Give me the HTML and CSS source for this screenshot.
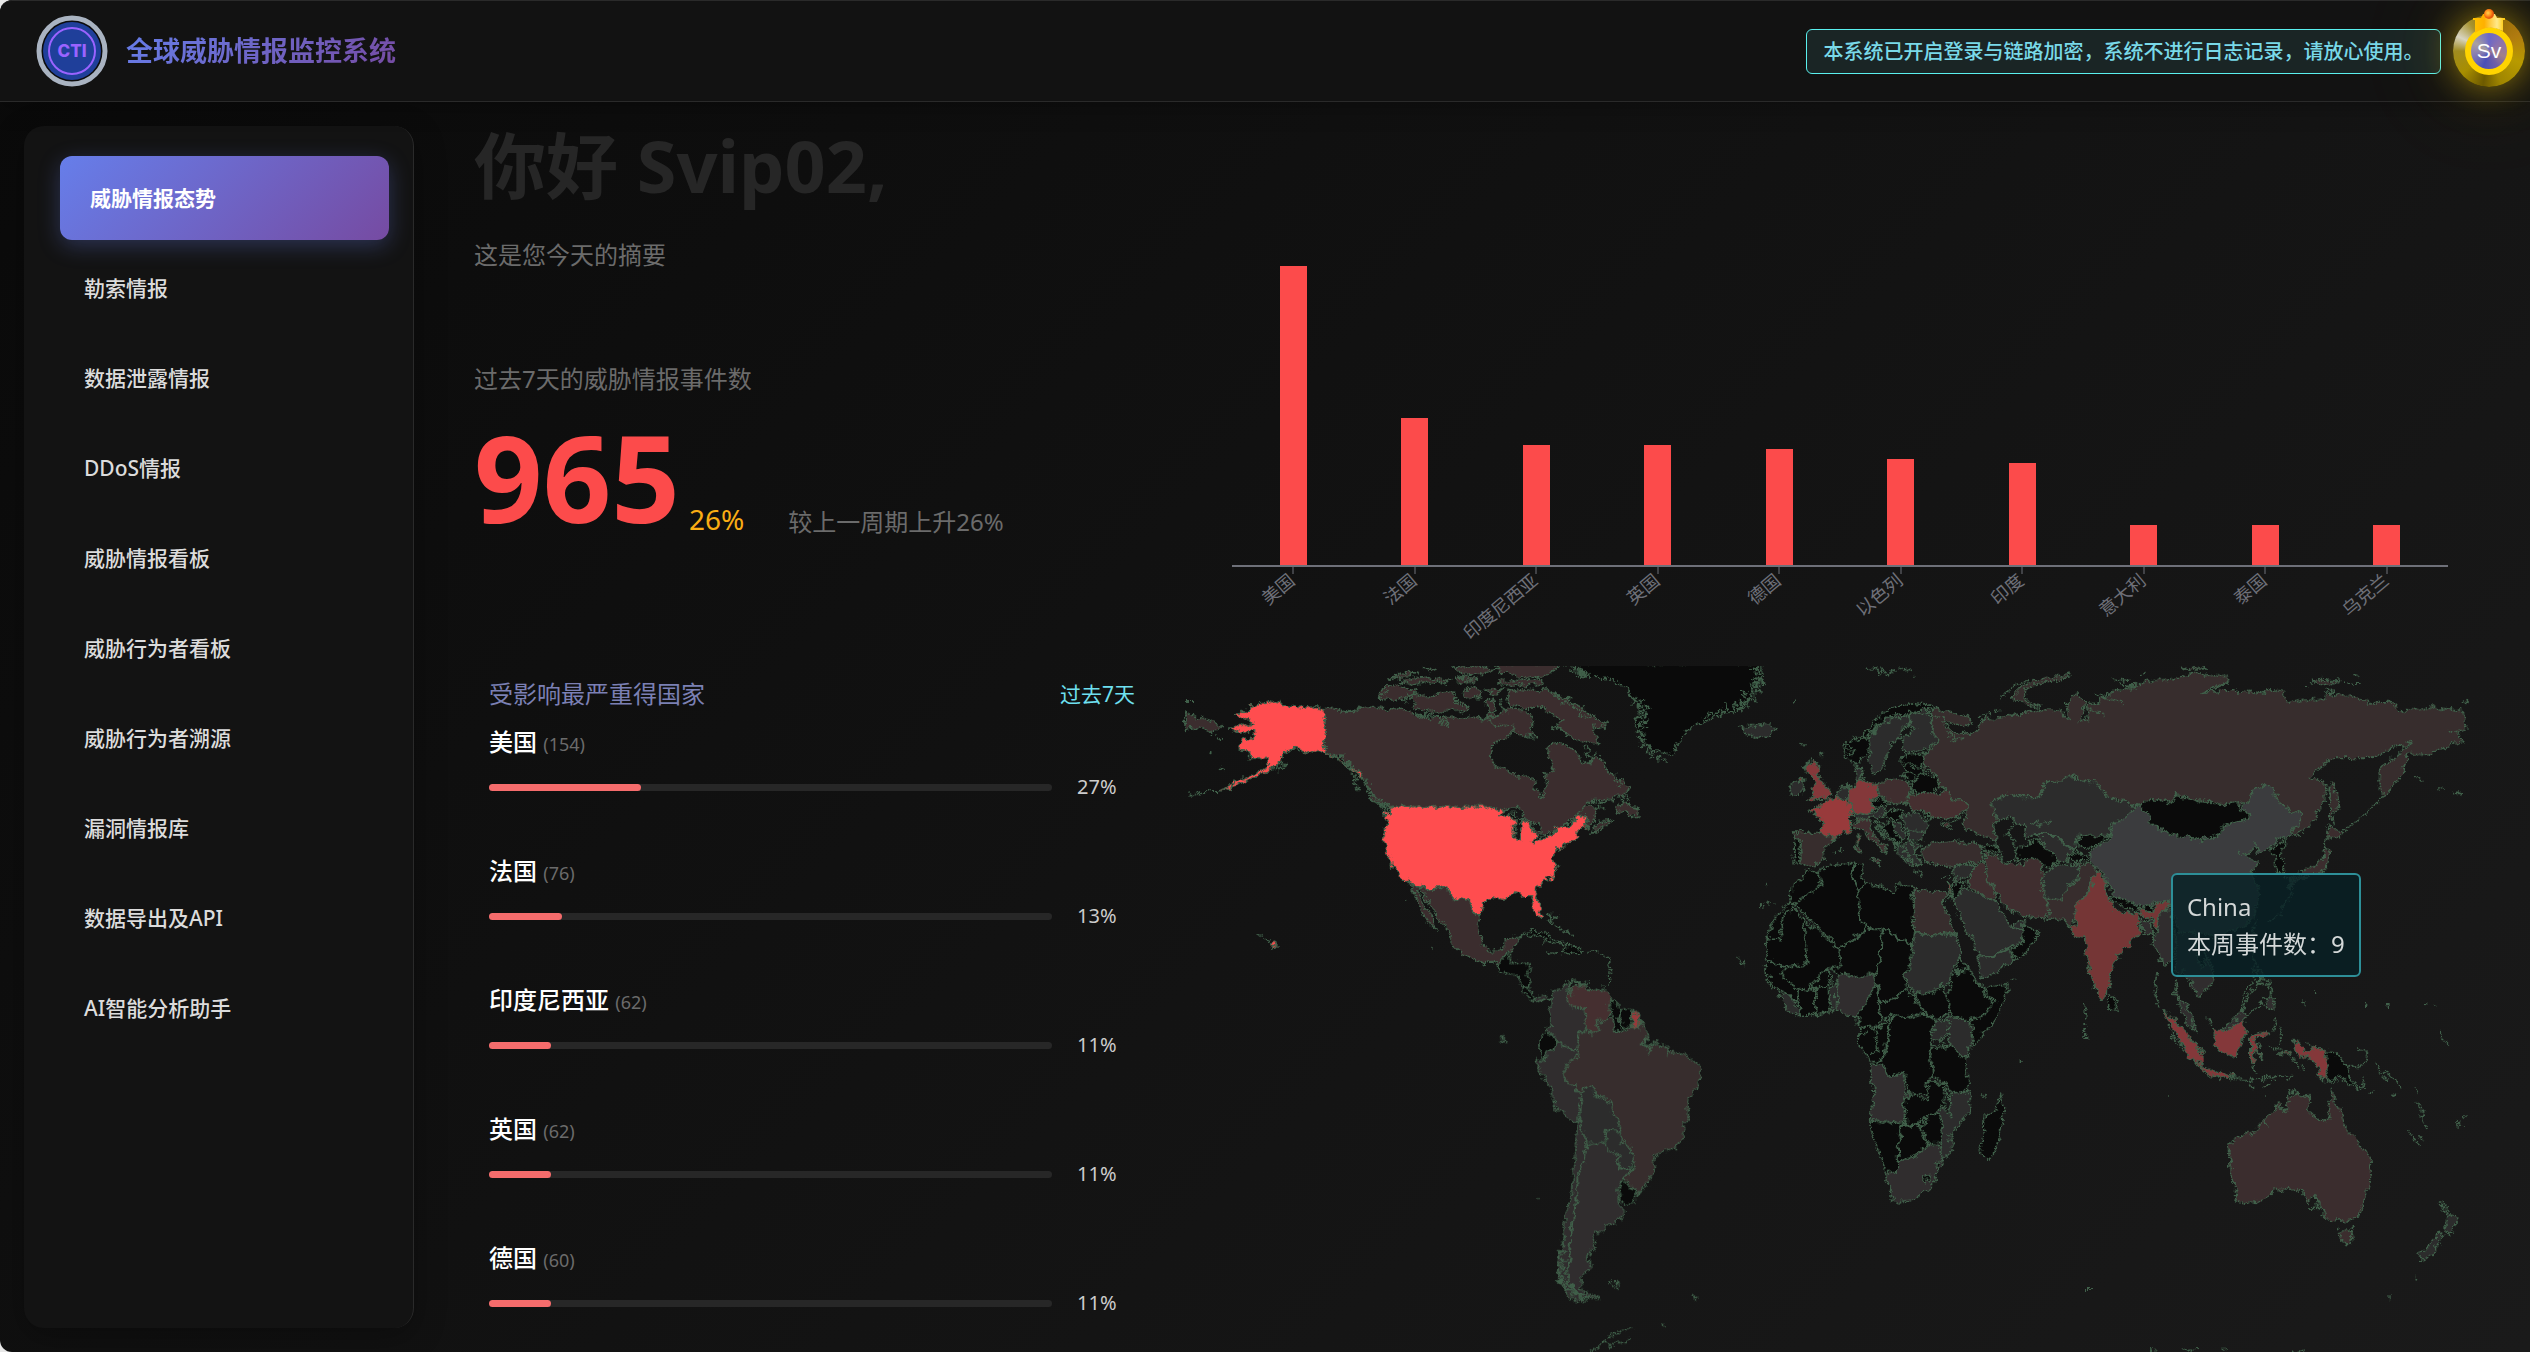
FILE: index.html
```html
<!DOCTYPE html>
<html lang="zh-CN">
<head>
<meta charset="utf-8">
<title>全球威胁情报监控系统</title>
<link rel="stylesheet" href="styles.css">
</head>
<body>
<header class="topbar">
  <svg class="logo" viewBox="0 0 72 72" role="img" aria-label="CTI">
    <circle cx="36" cy="36" r="33" fill="#0d0d0d" stroke="#a9b3c1" stroke-width="5"/>
    <circle cx="36" cy="36" r="29" fill="#1f3f9a"/>
    <circle cx="36" cy="36" r="23" fill="none" stroke="#9a63ff" stroke-width="2"/>
    <text x="36" y="42" class="logo-text">CTI</text>
  </svg>
  <h1 class="brand">全球威胁情报监控系统</h1>
  <p class="notice">本系统已开启登录与链路加密，系统不进行日志记录，请放心使用。</p>
  <button class="avatar" type="button" aria-label="Sv">
    <span class="avatar-core">Sv</span>
    <svg class="crown" viewBox="0 0 36 28" aria-hidden="true">
      <defs>
        <linearGradient id="crown-gold"><stop offset="0" stop-color="#ffc400"/><stop offset=".35" stop-color="#ffb000"/><stop offset=".75" stop-color="#ffe98a"/><stop offset="1" stop-color="#ffc800"/></linearGradient>
        <radialGradient id="crown-gem" cx=".4" cy=".4"><stop offset="0" stop-color="#ffd34d"/><stop offset=".6" stop-color="#ff8c1a"/><stop offset="1" stop-color="#e8590c"/></radialGradient>
      </defs>
      <path d="M2 9L10 9L12 5H24L26 9L34 9V11H32V22Q18 14 4 24V11H2Z" fill="url(#crown-gold)"/>
      <circle cx="18" cy="5" r="5" fill="url(#crown-gem)"/>
    </svg>
  </button>
</header>

<div class="layout">
  <nav class="sidebar">
    <a class="nav-item active" href="#">威胁情报态势</a>
    <a class="nav-item" href="#">勒索情报</a>
    <a class="nav-item" href="#">数据泄露情报</a>
    <a class="nav-item" href="#">DDoS情报</a>
    <a class="nav-item" href="#">威胁情报看板</a>
    <a class="nav-item" href="#">威胁行为者看板</a>
    <a class="nav-item" href="#">威胁行为者溯源</a>
    <a class="nav-item" href="#">漏洞情报库</a>
    <a class="nav-item" href="#">数据导出及API</a>
    <a class="nav-item" href="#">AI智能分析助手</a>
  </nav>

  <main class="dashboard">
    <section class="summary">
      <h2 class="hello">你好 Svip02,</h2>
      <p class="muted intro">这是您今天的摘要</p>
      <p class="muted">过去7天的威胁情报事件数</p>
      <div class="total">
        <strong class="total-value">965</strong>
        <span class="total-rate">26%</span>
        <span class="total-note">较上一周期上升26%</span>
      </div>
      <div class="ranking">
        <div class="ranking-head">
          <h3 class="ranking-title">受影响最严重得国家</h3>
          <a class="ranking-range" href="#">过去7天</a>
        </div>
        <ul class="countries">
          <li class="country"><p class="name">美国 <small>(154)</small></p><div class="meter"><div class="track"><div class="fill" style="width:27%"></div></div><span class="pct">27%</span></div></li>
          <li class="country"><p class="name">法国 <small>(76)</small></p><div class="meter"><div class="track"><div class="fill" style="width:13%"></div></div><span class="pct">13%</span></div></li>
          <li class="country"><p class="name">印度尼西亚 <small>(62)</small></p><div class="meter"><div class="track"><div class="fill" style="width:11%"></div></div><span class="pct">11%</span></div></li>
          <li class="country"><p class="name">英国 <small>(62)</small></p><div class="meter"><div class="track"><div class="fill" style="width:11%"></div></div><span class="pct">11%</span></div></li>
          <li class="country"><p class="name">德国 <small>(60)</small></p><div class="meter"><div class="track"><div class="fill" style="width:11%"></div></div><span class="pct">11%</span></div></li>
        </ul>
      </div>
    </section>

    <section class="visuals">
      <svg class="chart" viewBox="1180 126 1350 540" role="img" aria-label="各国威胁事件数">
        <g class="bars">
          <rect x="1280" y="266" width="27" height="300"/>
          <rect x="1401" y="418" width="27" height="148"/>
          <rect x="1523" y="445" width="27" height="121"/>
          <rect x="1644" y="445" width="27" height="121"/>
          <rect x="1766" y="449" width="27" height="117"/>
          <rect x="1887" y="459" width="27" height="107"/>
          <rect x="2009" y="463" width="27" height="103"/>
          <rect x="2130" y="525" width="27" height="41"/>
          <rect x="2252" y="525" width="27" height="41"/>
          <rect x="2373" y="525" width="27" height="41"/>
        </g>
        <path class="axis" d="M1232 566H2448"/>
        <path class="ticks" d="M1293 566v8M1415 566v8M1536 566v8M1658 566v8M1779 566v8M1901 566v8M2022 566v8M2144 566v8M2265 566v8M2387 566v8"/>
        <g class="labels">
          <text transform="translate(1293 579) rotate(-40)">美国</text>
          <text transform="translate(1415 579) rotate(-40)">法国</text>
          <text transform="translate(1536 579) rotate(-40)">印度尼西亚</text>
          <text transform="translate(1658 579) rotate(-40)">英国</text>
          <text transform="translate(1779 579) rotate(-40)">德国</text>
          <text transform="translate(1901 579) rotate(-40)">以色列</text>
          <text transform="translate(2022 579) rotate(-40)">印度</text>
          <text transform="translate(2144 579) rotate(-40)">意大利</text>
          <text transform="translate(2265 579) rotate(-40)">泰国</text>
          <text transform="translate(2387 579) rotate(-40)">乌克兰</text>
        </g>
      </svg>

      <div class="map-wrap">
      <svg class="map" viewBox="1180 666 1350 686" role="img" aria-label="世界地图">
        <defs>
          <!-- roughens coastlines and borders -->
          <filter id="coastline" filterUnits="userSpaceOnUse" x="1180" y="666" width="1350" height="686" color-interpolation-filters="sRGB">
            <feTurbulence type="fractalNoise" baseFrequency=".14" numOctaves="3" seed="4" result="noise"/>
            <feDisplacementMap in="SourceGraphic" in2="noise" scale="9" xChannelSelector="R" yChannelSelector="G"/>
          </filter>
        </defs>
        <g filter="url(#coastline)">
        <!-- North America -->
        <g transform="translate(1180 640) scale(.33333)">
          <path class="c1" d="M434 207L450 205 480 215 500 215 540 205 580 200 620 208 650 205 690 215 715 232 750 235 790 232 800 255 795 232 840 235 880 228 915 240 935 215 960 235 985 250 1010 268 975 292 940 310 928 345 945 380 975 385 1015 410 1058 408 1062 440 1085 470 1098 440 1095 408 1118 400 1122 375 1105 355 1105 320 1135 308 1170 318 1190 340 1205 362 1230 370 1248 342 1265 365 1285 395 1305 410 1330 425 1345 445 1330 465 1300 478 1240 482 1215 492 1195 520 1170 540 1145 556 1125 575 1090 590 1062 605 1050 600 1065 580 1060 560 1040 545 1030 520 1000 510 960 515 925 500 634 500 610 495 570 478 580 465 560 430 535 405 505 370 485 350 465 345 434 340Z"/>
          <path class="c1" d="M612 138L665 140 710 150 690 170 640 183 600 175ZM680 160L750 170 790 155 822 155 830 190 865 200 860 215 800 212 750 218 700 205 700 180ZM628 115L680 95 705 100 660 115ZM660 128L700 115 740 108 760 118 810 120 790 130 740 128 700 132ZM735 88L770 82 760 92ZM820 85L870 80 950 90 910 100 840 98ZM820 115L860 105 895 118 880 128 840 126ZM940 70H1150L1110 95 1100 110 1030 112 960 95ZM955 122L1085 120 1090 133 1000 137 955 132ZM850 155L880 142 910 155 895 175 860 172ZM920 145L970 148 940 165ZM915 185L940 178 950 205 925 212ZM985 155L1040 148 1100 152 1150 170 1210 205 1245 235 1282 248 1270 270 1240 260 1250 295 1255 315 1200 300 1160 285 1130 260 1150 240 1120 225 1090 200 1040 205 990 195 980 175ZM925 235L960 222 990 205 1040 215 1060 240 1050 270 1070 290 1020 285 1000 260 930 250ZM1310 515L1325 480 1345 490 1370 505 1375 530 1340 520ZM1235 575L1255 545 1295 543 1270 560 1245 575ZM1175 545L1215 495 1250 500 1245 540 1225 560 1215 526 1195 528 1185 545ZM18 217L60 235 100 240 125 260 95 280 60 262 18 270Z"/>
          <path class="us" d="M434 207L400 203 365 200 340 197 315 195 300 188 270 184 245 192 215 200 200 212 165 224 190 236 230 250 205 256 175 256 150 264 165 272 190 277 220 276 222 294 190 300 178 312 176 325 200 335 212 345 212 358 240 356 266 360 268 375 245 393 215 405 180 420 160 432 120 452 150 446 190 427 230 410 265 394 295 370 310 345 320 330 355 325 375 335 400 338 434 340 465 352 485 365 500 380 520 385 550 405 540 412 515 390 490 368 465 348 434 343ZM634 500H925L960 512 1000 515 975 530 1010 540 1000 560 1000 590 1010 603 1018 590 1018 560 1025 545 1045 545 1062 575 1075 590 1100 580 1125 575 1130 560 1170 555 1185 545 1195 528 1215 526 1220 560 1195 575 1185 600 1150 615 1140 640 1130 625 1118 655 1130 680 1122 705 1095 720 1070 745 1070 775 1082 810 1083 835 1075 838 1058 800 1050 770 1030 765 1005 760 985 768 975 780 935 772 905 795 900 825 885 820 865 780 845 770 830 785 800 742 750 748 715 738 690 732 655 705 635 675 630 650 615 620 612 580 620 540 612 510 634 520ZM274 914L282 908 290 918 276 926Z"/>
          <path class="sea" d="M958 530L985 508 1010 503 1030 520 1045 538 1020 535 995 520 975 532ZM1003 602L1000 575 1010 548 1030 543 1022 570 1018 600ZM1050 548L1075 553 1085 572 1065 574ZM1050 602L1085 583 1125 572 1120 582 1085 595 1060 607Z"/>
          <path class="c1" d="M690 732L715 738 750 748 800 742 830 785 845 770 865 780 885 820 898 828 895 870 910 915 935 935 965 930 975 900 1012 888 1010 910 995 930 970 940 965 965 955 985 940 965 910 970 860 950 815 915 812 885 785 845 755 805 735 770 720 742 712 755 730 790 750 820 768 868 745 850 720 805 705 770Z"/>
          <path class="none" d="M1160 70L1200 95 1230 110 1300 118 1340 150 1380 200 1365 250 1385 300 1410 325 1440 335 1480 345 1505 290 1530 262 1560 250 1620 225 1680 205 1700 190 1720 150 1740 110 1745 70ZM1015 890L1060 870 1090 875 1120 895 1155 912 1120 908 1075 885ZM1145 940L1160 915 1190 922 1210 938 1180 940Z"/>
          <path class="coast" d="M18 183h26M105 292l25 6M28 464l60-10 30-2M92 335l8 4M120 382l10 8M285 385l20-15 12 4-20 15zM318 340l20-12 20 5M490 350l10 20 8-6 4 20 10-8 4 22 12-6M500 372l20 20-6 12 20 14-8 10 12 24M545 410l10 24 14 4-4 16 16 10 4 14 20 2-8 14 30-4-10 14 25 4M570 478l30 20 20 4M520 430l16 26M1165 92l50 6-20-10 40 12-50 6 40 4M1350 165l20 10-10 12 30-4-14 18 28 2-24 14 20 8-30 10 30 6-24 14 22 8-26 10 20 12-20 6 24 10-14 16 24 6-8 14 20 0-4 18 24-4-4 14 26-4M1570 240l20-24 14 14 10-26 18 20 6-24 20 18 8-26 16 20 4-30 20 14 0-24 20 6-4-24 18 2-14-20 24-4-16-14M1100 150l40 14-20 6 44 8-14 12 36 2-10 14 30 6-8 14 30 6M1260 260l18-12M1210 318l20 16-16 8 20 14M1300 420l24 10-10 14M1230 482l40 6-20 10 26 8M1330 470l-10 30M1340 460l6 30 24 20M1100 815l20 25-14 4 30 14 10 14 34 14M1110 830l30 4M1105 935l18 3M1225 935l28 2M1265 940l22 22 5 28-6 42M1150 1045l30-20 40 10M230 882l15 3M250 890l22 14M630 120l30-14-10-2M840 110l40 8-30 6M710 222l20 4M1090 400l10-4M1040 292l20 4M675 782h4M754 926h4"/>
          <path class="coast" d="M480 215l20 0-6 6 30-14-4 8 30-12M600 170l20-14M670 182l12-10-8 20M720 232l-10-8 30 6-6-8 30 8M780 240l24 20M905 225l16 10-22-2M960 175l4 30 20 14M1120 260l36 20M1232 370l16-34"/>
        </g>
        <!-- South America -->
        <g transform="translate(1450 940) scale(.33333)">
          <path class="none" d="M160 48L178 42 178 70 210 70 240 72 236 105 238 140 218 140 200 105 175 102 148 95 145 75ZM218 140L238 140 250 165 270 178 245 180 215 152ZM485 175L512 210 508 235 520 265 500 275 490 260 490 230 478 215ZM512 210L550 212 545 262 520 265 508 235ZM270 290L290 280 322 295 320 318 295 335 282 362 270 345ZM515 725L555 750 552 785 530 792 508 780Z"/>
          <path class="c0" d="M250 175L285 162 300 180 280 180 262 190ZM300 182L312 155 345 135 362 128 350 165 358 195 408 208 404 240 408 270 385 275 385 325 350 325 322 295 288 272 303 250ZM322 300L350 325 385 330 382 352 350 370 340 405 358 435 375 430 380 452 392 455 388 510 382 552 320 505 300 445 265 385 262 355 282 362 295 335 320 318ZM410 612L460 608 512 650 505 685 552 685 520 718 505 745 505 785 522 820 505 845 465 852 462 880 432 880 435 920 408 950 425 975 395 1010 390 1035 405 1060 455 1073 400 1075 350 1020 360 940 368 830 382 770 382 710 398 675ZM382 552L388 540 400 580 410 612 398 675 382 710 382 770 368 830 360 940 350 1000 360 1033 395 1075 410 1087 365 1078 335 1040 322 1000 330 950 342 890 345 830 362 780 370 690Z"/>
          <path class="ven" d="M362 150L395 130 430 152 470 148 485 175 475 195 480 225 470 240 440 240 448 270 425 284 410 268 404 240 408 208 358 195 350 165Z"/>
          <path class="c1b" d="M385 275L408 270 425 284 448 270 440 240 470 240 490 235 490 260 500 275 545 262 562 264 575 240 590 275 600 295 575 315 605 320 620 305 650 320 655 335 700 338 745 370 757 405 740 440 712 485 712 540 700 580 680 622 645 630 612 655 608 700 590 730 562 765 555 745 520 718 552 685 545 640 530 612 512 608 510 560 502 528 487 525 482 488 432 465 430 435 392 455 380 452 375 430 358 435 340 405 350 370 382 352Z"/>
          <path class="low" d="M392 455L430 435 432 465 482 488 487 525 502 528 512 570 470 572 460 608 410 612 400 580 388 540ZM470 572L508 572 512 608 535 615 552 660 540 685 505 685 512 650 465 618Z"/>
          <path class="hot3" d="M550 218L568 222 572 240 562 264 548 262Z"/>
          <path class="coast" d="M360 145l6 20-10-4M355 125l20-6 8 12 30-4M440 150l30-10M570 318l20-20-4 24 24-14-14 24 18-8-22 18M652 320l-2 30 4-20M560 770l16-22 8 4 12-24M340 890l-8 20 14 6-16 14 18 8-22 14 20 10-20 14 16 12-16 14 16 14-14 10 20 12-4 12 24 2-4 14 26-4 2 12 30-4M328 960l10 20-12 14 14 12-10 16 20 10-8 14 24 8M350 1020l10 24 20 4-4 14 26 2M360 1040l30 30M475 1030l20-6 14 4-8 12-18-2zM725 1064l20 10M635 1157l16-1M265 774h4M150 290l10 6-8 8 18 2-10-14M470 1190l40-14 40-13M420 1235l30-14 20-20 10 18 24-20 8 14 26-18M440 900l8 4M860 55l14 20 10-10 4 18M240 180l14 10M270 185l10-8M320 5l-40 2M300 38l16 2"/>
        </g>
        <!-- Russia and East Asia -->
        <g transform="translate(2080 650) scale(.33333)">
          <path class="c1b" d="M-445 177L-400 184-325 204-330 227-380 223-410 210-395 235-380 246-330 252-295 230-285 204-260 209-170 191-115 177-60 184-35 204-45 161-5 126 15 161 0 220 25 204 20 175 30 161 60 150 100 125 150 110 200 95 290 85 345 65 380 75 440 80 445 100 400 115 365 130 440 120 510 125 550 130 560 118 610 125 620 155 640 155 690 150 730 148 740 130 790 140 830 140 860 158 935 158 955 180 1040 178 1060 172 1150 182 1157 240 1130 245 1150 275 1110 285 1050 312 980 315 970 370 910 440 897 400 900 355 940 325 985 285 940 290 885 320 850 325 755 325 690 380 740 405 735 450 700 510 655 558 637 545 640 530 670 485 640 488 600 460 580 415 550 405 520 415 508 455 470 460 415 465 375 452 330 450 290 432 280 455 215 448 175 468 85 439 50 396 20 396-20 380-110 402-115 441-180 441-220 431-263 461-245 509-260 536-250 576-300 557-355 525-335 477-340 461-385 445-395 420-422 405-430 380-465 354-462 311-422 273-442 252ZM752 400L765 410 775 470 760 490 758 520 750 500ZM697 92L720 86 780 92 740 104 705 102ZM300 56L350 48 380 56Z"/>
          <path class="c1" d="M735 590L750 610 735 660 690 672 645 672 700 650 725 630ZM748 530L790 548 765 565 742 560ZM635 682L690 680 640 700 632 720Z"/>
          <path class="china" d="M175 468L205 490 210 522 250 535 265 555 310 558 355 572 415 555 430 525 480 515 512 495 475 475 508 455 520 415 550 405 580 415 600 460 640 488 670 485 655 530 637 535 635 555 600 568 560 600 530 615 535 590 495 612 510 630 540 635 512 665 530 700 540 740 520 800 490 830 450 845 400 860 370 850 340 845 300 850 290 820 280 790 265 752 235 755 215 765 175 768 110 738 80 705 75 670 45 650 25 605 90 570 95 525 120 495 150 485Z"/>
          <path class="none" d="M175 468L215 448 280 455 290 432 330 450 375 452 415 465 470 460 480 475 512 495 480 515 430 525 415 555 355 572 310 558 265 555 250 535 210 522 205 490ZM570 600L600 580 625 562 600 610 615 640 612 668 590 670 585 620ZM92 740L110 740 175 770 172 790 130 770 95 755ZM188 768L216 768 211 786 193 781Z"/>
          <path class="hot1" d="M178 775L215 785 235 760 265 752 272 765 245 790 230 840 215 805 182 795Z"/>
          <path class="c0" d="M180 808L215 812 220 850 190 850ZM230 845L245 785 275 770 285 870 275 930 250 945 220 870ZM285 850L340 845 350 880 385 930 400 960 400 990 360 1040 330 1000 310 960 290 980Z"/>
          <path class="none" d="M345 850L370 880 380 930 365 955 350 900Z"/>
          <path class="coast" d="M-240 145L-200 107-150 88M95 88l50 2M180 72l20-4M120 100l40 6-30 8 40 4M50 140l30-10-10 16 50 6 4 14M20 175l50 14 4 16M365 130l40-20 40-15M675 112h20M740 120l24 4-20 4M795 97l50 2M820 76h12M1145 152l12 4-6 6M1100 245l36 2M980 280l16-6M1005 380l20 10M1075 415l20 2M1120 432l14-6 18 8M910 440L880 470 840 510 790 540M745 410l10 40M740 560l-8 20 8 16M610 680l30 10-10 20 6 24-24 26-12 30-40 30M530 805l-10 30-4 40 8 60-10 40 24 30M520 960l30 30-12 14 32-4-10 20 16-4 4 30M545 990l-36 40-20 50M220 870l-4 10M285 985l-4 60M228 980l-2 40 10 50M480 608l20 4M540 600l-20-20M640 690l30-4 20-8M670 1060l2-8M855 1062h4M1062 1064h10M708 1030h3"/>
        </g>
        <!-- Europe, Africa, western and southern Asia -->
        <g transform="translate(1740 650) scale(.33333 .35714)">
          <path class="c1b" d="M810 135L850 100 900 82 990 68 985 78 910 90 860 110 850 135 900 160 870 155ZM162 510L245 512 290 525 255 560 252 585 225 602 195 605 182 595 182 530 165 525ZM545 560L575 540 640 535 690 540 722 545 732 592 700 598 660 600 610 605 565 598 548 580ZM522 668L570 675 625 675 615 700 605 700 650 795H523ZM915 697L965 695 985 665 1015 640 1020 598 1060 600 1072 625 1050 635 1058 665 1035 690 1005 720 1010 750 990 770 970 752 925 752 930 735Z"/>
          <path class="c2" d="M412 375L440 362 505 368 512 400 498 432 440 420 415 410ZM332 485L365 475 395 470 385 495 410 530 440 550 432 570 410 545 375 510 350 500ZM390 585L420 588 415 600ZM348 545L358 545 360 567 350 571ZM735 565L775 580 795 600 850 600 875 583 905 595 910 650 915 700 930 735 910 752 860 745 820 735 790 710 760 665 745 640ZM700 605L730 598 745 640 765 665 760 700 740 695 680 655 695 635Z"/>
          <path class="ven" d="M498 432L512 405 560 402 598 402 625 392 635 415 680 430 685 445 665 460 640 468 620 475 605 470 580 470 560 455 545 448 520 450ZM610 485L630 483 635 493 620 498Z"/>
          <path class="low" d="M5 215L40 215 90 205 112 222 90 240 55 247 20 235ZM150 385L165 365 192 368 190 398 152 404ZM388 245L415 210 450 185 480 180 508 185 512 210 485 225 480 245 450 260 445 290 432 310 430 335 400 350 385 310 388 285ZM510 180L555 162 575 200 580 235 598 255 560 280 500 290 485 270 488 245 525 222 512 210ZM345 335L365 330 370 350 365 365 347 365ZM285 410L310 378 330 378 325 425 300 418ZM335 462L370 460 400 455 430 440 432 465 395 470 350 480ZM462 475L482 485 497 515 487 530 465 510ZM485 465L520 452 550 470 565 490 555 508 500 508ZM500 508L555 510 550 530 510 538ZM470 545L510 538 545 548 520 560 545 600 515 610 490 585 475 570ZM640 605L700 600 690 635 650 650 640 630ZM905 640L940 605 1020 598 1015 640 985 665 965 695 915 697ZM757 430L800 402 840 412 905 412 910 375 1000 355 1040 370 1070 370 1105 410 1160 430 1190 435 1140 480 1110 490 1110 520 1015 522 1000 560 970 540 940 515 890 515 855 530 852 490 820 475 795 480 760 460ZM890 515L940 515 970 540 1000 560 980 590 958 590 920 560ZM635 695L675 665 740 695 765 700 790 740 815 780 850 785 845 818 810 835 760 860 715 855 690 800 665 760 650 725ZM715 855L760 860 810 835 820 865 780 895 722 922ZM810 775L850 755 850 785ZM523 797H650L660 850 640 900 620 940 600 955 560 960 530 965 510 950 497 915 512 880ZM115 965L145 960 180 1010 178 1028 140 1005ZM270 950L292 930 290 1005 272 1008ZM585 1040L625 1035 628 1070 600 1090 575 1095ZM628 1028L695 1040 695 1105 678 1145 628 1105ZM630 1245L690 1235 692 1295 630 1355 637 1405 605 1430 600 1390 608 1320 582 1290 615 1280 635 1310 630 1270Z"/>
          <path class="c0" d="M292 930L300 905 345 915 405 908 412 930 375 990 350 1030 325 1025 290 1005ZM390 1165H435L445 1195 490 1185 495 1240 512 1240 492 1255 495 1325 385 1315 402 1250ZM435 1465L470 1460 475 1430 515 1425 570 1385 600 1390 608 1440 570 1505 520 1540 460 1547 450 1510Z"/>
          <path class="none" d="M310 265L345 250 385 225 410 190 450 165 510 148 570 152 590 165 555 162 510 180 480 180 450 185 415 210 385 245 388 285 350 318 320 305ZM485 300L510 295 555 292 555 320 540 320 560 345 540 350 515 370 485 350 510 345 490 325ZM515 370L550 348 590 355 598 378 580 402 515 398ZM163 525L182 530 180 598 160 598ZM390 420L420 415 450 430 420 442 400 440ZM435 460L460 445 492 450 480 470 445 475ZM405 480L430 492 460 478 465 520 490 530 470 545 450 520 430 505ZM550 450L570 465 565 480ZM640 655L670 655 660 680 635 698ZM722 545L770 548 785 545 775 570 740 560ZM835 555L890 530 920 560 958 590 930 617 905 595 875 583 835 588ZM1015 520L1110 520 1080 540 1045 555 1010 545ZM985 570L1040 575 1055 592 1010 590 985 592ZM850 765L893 790 880 825 845 860 820 862 815 838 845 820ZM195 618L240 625 242 660 200 690 165 710 150 700 155 670 185 640ZM240 610L300 600 345 598 338 640 358 680 360 760 385 778 298 835 165 715 200 690 242 660ZM345 598L368 600 365 640 375 650 358 680 338 640ZM375 652L430 665 465 685 475 655 520 665 522 790 515 825 425 780 385 778 360 760 358 680ZM150 702L165 715 130 740 120 808H78L110 745ZM80 808H120L130 740 165 730 190 755 200 882 130 888 82 868ZM190 755L298 835 302 882 260 892 205 950 175 948 130 920 130 888 200 882ZM298 835L385 778 425 780 422 860 405 905 345 915 300 905 265 895 302 882ZM425 780L515 825 510 880 495 915 498 950 450 980 415 985 410 940 405 905 422 860ZM650 900L690 895 715 940 765 985 730 1025 690 1035 640 1025 622 980 630 930ZM725 950L800 935 800 960 770 1030 700 1110 695 1040 730 1025 765 985 740 970ZM660 860L715 935 690 895 650 900ZM520 965L560 960 600 955 605 930 622 980 628 1020 590 1035 560 1020ZM420 990L450 980 498 950 520 970 555 1018 500 1028 455 1025 425 1040ZM85 870L130 888 130 920 175 948 170 985 140 960 105 950 80 930 75 890ZM172 950L225 955 225 1020 180 1025ZM205 945L260 892 275 935 225 950ZM228 945L265 940 270 1015 228 1022ZM350 1030L375 990 412 930 415 985 425 1055 360 1055ZM360 1058L425 1058 455 1025 450 1060 435 1130 425 1150 390 1150 355 1100ZM455 1025L500 1028 555 1018 585 1040 575 1100 570 1140 580 1200 560 1210 565 1245 510 1240 490 1185 445 1195 435 1165 390 1160 425 1150 440 1100ZM575 1115L628 1108 678 1145 685 1230 635 1240 610 1210 580 1195 575 1150ZM492 1260L512 1240 565 1265 560 1210 612 1215 610 1275 545 1330 500 1325ZM532 1325L582 1298 608 1320 600 1380 570 1385ZM482 1330L530 1330 565 1385 515 1425 475 1430ZM385 1318L520 1325 482 1330 470 1460 435 1465 410 1390ZM550 1480L565 1470 570 1478 558 1493ZM586 1436L598 1436 596 1448 588 1446ZM782 1248L795 1290 765 1410 740 1425 720 1410 730 1350 730 1305 765 1290ZM1108 965L1130 985 1125 1010 1105 1000Z"/>
          <path class="sea" d="M760 490L790 470 825 475 815 500 800 515 825 540 830 580 800 600 780 575 770 530Z"/>
          <path class="hot1" d="M1050 635L1080 622 1098 650 1098 680 1112 710 1130 730 1195 740 1200 790 1160 830 1115 880 1110 940 1085 980 1070 960 1045 890 1033 800 1010 810 990 775 1010 770 1000 725 1035 690 1058 665Z"/>
          <path class="hot2" d="M200 320L222 312 238 328 230 345 245 365 262 385 275 400 260 415 205 422 225 405 208 390 228 375 212 350 200 345ZM178 358L196 362 192 370 180 366ZM325 385L345 380 360 362 385 375 410 372 412 410 390 420 400 445 385 458 340 458 338 435 325 425ZM626 655L634 655 631 695ZM350 522L358 522 358 540 350 540Z"/>
          <path class="hot3" d="M205 447L240 440 250 425 285 412 300 420 340 435 330 465 332 512 305 512 285 525 245 512 243 470 230 460Z"/>
          <path class="coast" d="M30 50l30 6-20 8 28 8-24 10 20 6-30 10 10 10M0 110l20 8-14 12 20 10-16 12 16 8M375 45l20 10 14-6 8 16 14-10 8 14 20-14 10 6M475 48l20 10 20-2M520 75h6M162 147h8M178 262l12 4-6 6M240 285l6 4-4 10M185 330l12-8-6 22 10 4M200 316l14-10M310 265l20 4-14 10 26 4-18 12M345 245l10 12 14-18 6 10 16-22 10 8 8-24 14 6 6-20 20 6 4-16 24 8 4-16 28 6 4-12 34 8 20-6 24 12M340 340l14-14 18 20-10 8 14 8M310 385l14-4-6 10M485 320l30-4 10 14 24-4M490 345l24 0 10 12M400 465l16 14 24 6M400 480l20 24 20 14 20 20 8 22M410 500l30 26M490 545l12 14-14 6 22 10-10 10 24 4-10 12 26 2-6 10M510 545l20 14-8 8 24 8M545 618v20M520 620l24 4M180 530l-2 30 4 34M285 565l8 4M298 556l10 8M60 714l14 2M84 714l12-6M104 710l8-4M74 652l10 4M0 870l8 14 4-10 6 14M78 900l14 16-10 6 22 14-12 6M600 640l30-4M640 645l30-10M575 1100l14 12 10-20 14 10 4 14M560 1210l50 5M615 1215l14 60 4 30M395 1060l14 8 4 50-20 14M360 1080l20-10M620 230l20 10-6 14 40-4M720 185l30-6M770 172l14-6M800 185l30-6M610 485l-8-6M655 470l-16 12M870 490l30-14-4 14 40-10-20 14M1010 540l14-14M985 575l30-14 10 20M700 930l28 10M815 922l20 2M720 1245l20 10M1035 990v40M1036 1050v40M1245 905l4 40M848 1145v6"/>
        </g>
        <!-- South-East Asia and Oceania -->
        <g transform="translate(2080 960) scale(.33333)">
          <path class="c0" d="M290 60L295 110 330 150 345 210 320 190 300 140 285 100ZM420 212L465 180 485 145 500 160 490 180 465 205 435 220ZM555 112L580 108 582 148 562 145Z"/>
          <path class="hot2" d="M250 155L275 168 320 220 365 280 365 318 330 295 290 225ZM365 322L400 330 455 348 450 355 400 348 372 338ZM400 210L430 215 470 195 490 180 498 215 480 260 468 292 412 275ZM510 240L520 222 570 220 560 230 525 232 520 250 545 255 530 265 548 305 525 270 518 315 510 300ZM640 245L665 250 668 270 690 280 705 258 740 275 738 360 710 350 725 320 680 290 655 290ZM505 370L525 382 510 376ZM548 388L570 370 560 384ZM598 282L628 278 626 286Z"/>
          <path class="none" d="M740 275L780 290 805 330 800 345 832 385 815 380 775 345 760 362 740 362Z"/>
          <path class="c1" d="M445 555L480 530 530 515 545 480 570 465 590 432 615 455 630 410 655 402 690 410 685 450 735 488 745 470 755 385 768 435 785 450 795 505 830 540 868 590 873 640 860 700 835 770 800 785 740 778 720 740 705 705 685 728 665 692 630 684 580 695 550 718 500 730 465 722 470 690 450 620ZM778 815L818 812 812 850 795 857Z"/>
          <path class="low" d="M1080 728L1108 765 1138 772 1110 825 1092 800 1105 775ZM1078 815L1090 820 1060 880 1030 900 1012 885 1050 855Z"/>
          <path class="coast" d="M240 0l12 14M228 40l-4 40 12 50M262 195l20 40 14 10 14 30M385 175l6 20M360 265l14 12M520 0l16 20-10 10 30 14-12 12 28 6-14 16 20 12-10 14 20 10M515 65l-25 50-4 40M500 165l30-14 14-24 10 10M585 175l2 20-10 16M605 200l-6 20 8 20-8 14M455 350l40 10 60-4 40-8 30-6M520 318l4 20M570 260l40 10 20 16M640 290l16 40M620 358l20-16M668 310l4 20M575 352l12 12M680 248l16 10M735 360l30-6 10 12M800 345l40 40 14-6-6-26M805 320l30 2 26-20 4-24-30-12M860 395l20 8M885 310l14 20 30 14 20 24 16 16M905 350l20 8M940 400l14 4M1005 385l10 10M1012 425l12 24 4 20 14 40M1018 470l14-4M980 515l20 22 20 18M1020 530l14 14M1125 485l16 4-8 10 18 2M1145 478l14-14M1080 210l4 20 20 26M625 400l20-4 10 10 30 0 10 20-12 6M545 478l14 14-4-24M605 440l12 14M443 595l12 14-10 6M690 745l20-4-2-30 14 30-14 8M770 800l6 4M815 798l-2 30M1010 950l-2 8M928 1012h4M1020 905l10-4M15 990h24M210 1170l20 2M305 1172l20-6 10 8 16-6M425 1172l20-2M640 1174l30 0M1090 725l18 30M268 408h4M670 124l2 12M1035 130h4M1060 134h10M553 408h4M920 138h6"/>
        </g>
        </g>
      </svg>
      <div class="tooltip" role="tooltip"><p>China</p><p>本周事件数：9</p></div>
      </div>
    </section>
  </main>
</div>
</body>
</html>
```
FILE: styles.css
```css
* { box-sizing: border-box; margin: 0; padding: 0; }

html { background: #e8e8e8; }

body {
  min-height: 100vh;
  overflow: hidden;
  border-radius: 12px 0 0 12px;
  background: linear-gradient(135deg, #0a0a0a 0%, #1a1a1a 100%);
  color: #fff;
  font-family: "Noto Sans", "Noto Sans CJK SC", sans-serif;
}

.topbar {
  position: relative;
  z-index: 2;
  display: flex;
  align-items: center;
  height: 102px;
  padding: 0 5px 0 36px;
  background: #121212;
  border-top: 1px solid #2a2a2a;
  border-bottom: 1px solid #2a2a2a;
  border-top-left-radius: 12px;
  box-shadow: 0 4px 24px rgba(0, 0, 0, .3);
}

.logo { width: 72px; height: 72px; }

.logo-text {
  fill: #9a63ff;
  font: 800 17px Inter, sans-serif;
  text-anchor: middle;
}

.brand {
  margin-left: 18px;
  font-size: 27px;
  line-height: 40px;
  font-weight: 700;
  background: linear-gradient(135deg, #667eea, #764ba2);
  background-clip: text;
  color: transparent;
}

.notice {
  margin-left: auto;
  width: 635px;
  border: 1px solid #5af0ee;
  border-radius: 6px;
  background: #1a2525;
  color: #79d9e8;
  font-size: 20px;
  line-height: 43px;
  font-weight: 500;
  text-align: center;
  white-space: nowrap;
}

.avatar {
  position: relative;
  display: grid;
  place-items: center;
  width: 72px;
  height: 72px;
  margin-left: 12px;
  border: 0;
  border-radius: 50%;
  background: conic-gradient(#8a6a00, #b07a10 60deg, #b89a00 110deg, #a08600 160deg, #6d5a00 190deg, #a88e00 230deg, #a08c20 270deg, #d8d4c0 295deg, #a89430 325deg, #8a6a00);
  box-shadow: 0 0 30px rgba(255, 215, 0, .4), 0 0 60px rgba(255, 200, 0, .2), 0 0 120px rgba(255, 200, 0, .14);
}

.avatar-core {
  display: grid;
  place-items: center;
  width: 48px;
  height: 48px;
  border: 6px solid #ffd400;
  border-radius: 50%;
  background: conic-gradient(#6a68c8, #8a70b0 50deg, #a08088 110deg, #7060a8 150deg, #4a50b8 200deg, #8a80b0 260deg, #a8a0a0 300deg, #6a68c8);
  color: #fff;
  font: 400 21px "Liberation Sans", sans-serif;
}

.crown {
  position: absolute;
  top: -6px;
  left: 18px;
  width: 36px;
  height: 28px;
}

.layout { display: flex; align-items: flex-start; }

.sidebar {
  flex: 0 0 390px;
  display: flex;
  flex-direction: column;
  gap: 6px;
  min-height: calc(100vh - 150px);
  margin: 24px 0 24px 24px;
  padding: 30px 24px 30px 30px;
  border-right: 1px solid #2a2a2a;
  border-radius: 20px;
  background: #131313;
  box-shadow: 0 8px 32px rgba(0, 0, 0, .3);
}

.nav-item {
  margin-right: 6px;
  padding: 0 30px;
  border-radius: 12px;
  color: #dcdcdc;
  font-size: 21px;
  line-height: 84px;
  font-weight: 500;
  text-decoration: none;
}

.nav-item.active {
  margin: 0 0 0 6px;
  background: linear-gradient(135deg, #667eea, #764ba2);
  box-shadow: 0 6px 22px rgba(102, 126, 234, .3);
  color: #fff;
  font-weight: 700;
}

.dashboard {
  flex: 1;
  display: grid;
  grid-template-columns: 706fr 1350fr;
  margin-left: 60px;
  padding-top: 24px;
}

.hello {
  color: #262626;
  font-size: 72px;
  line-height: 78px;
  font-weight: 700;
}

.muted { color: #6b6b6b; font-size: 24px; line-height: 36px; }

.intro { margin: 33px 0 88px; }

.total { display: flex; align-items: flex-end; margin-top: 20px; }

.total-value {
  color: #fc4b4b;
  font-size: 120px;
  line-height: 120px;
  font-weight: 700;
}

.total-rate { margin-left: 9px; color: #faad14; font-size: 28px; line-height: 36px; }

.total-note { margin-left: 44px; color: #6b6b6b; font-size: 24px; line-height: 30px; }

.ranking { margin-top: 139px; padding: 0 45px 0 15px; }

.ranking-head { display: flex; align-items: center; justify-content: space-between; line-height: 36px; }

.ranking-title { color: #7b80b4; font-size: 24px; font-weight: 400; }

.ranking-range { color: #6fe0f0; font-size: 21px; text-decoration: none; }

.countries { margin-top: 12px; list-style: none; }

.country { margin-bottom: 51px; }
.country:last-child { margin-bottom: 0; }

.name { font-size: 24px; line-height: 36px; font-weight: 500; }
.name small { color: #6b6b6b; font-size: 18px; line-height: 18px; font-weight: 400; }

.meter { display: flex; align-items: center; gap: 25px; margin-top: 12px; line-height: 30px; }

.track { flex: 1; height: 7px; border-radius: 4px; background: #272727; }

.fill { height: 7px; border-radius: 4px; background: #f56c6c; }

.pct { width: 58px; color: #ccc; font-size: 20px; }

.chart, .map { display: block; width: 100%; height: auto; }

.bars { fill: #fc4b4b; }
.axis { stroke: #6e7079; stroke-width: 2; }
.ticks { stroke: #6e7079; stroke-width: 1; }
.labels { fill: #6e7079; font-size: 18px; text-anchor: end; dominant-baseline: middle; }

.map-wrap { position: relative; }

.map path {
  stroke: #40604a;
  stroke-width: 2;
  stroke-dasharray: 2 1;
  vector-effect: non-scaling-stroke;
}

.map .coast { fill: none; }
.map .sea { fill: #161616; }
.map .none { fill: #0a0a0a; }
.map .low { fill: #2c2c2c; }
.map .c0 { fill: #302d2e; }
.map .c1 { fill: #3b2d2e; }
.map .c1b { fill: #372d2d; }
.map .c2 { fill: #3f2e2f; }
.map .ven { fill: #452f30; }
.map .china { fill: #3b3c3e; }
.map .hot1 { fill: #753636; }
.map .hot2 { fill: #84383a; }
.map .hot3 { fill: #983a3b; }
.map .us { fill: #ff4d4f; }

.tooltip {
  position: absolute;
  left: 73.4%;
  top: 30.2%;
  padding: 13px 14px;
  border: 2px solid #2d8f98;
  border-radius: 6px;
  background: rgba(8, 32, 38, .8);
  color: #d4d8d8;
  font-size: 24px;
  line-height: 37px;
  white-space: nowrap;
}
```
